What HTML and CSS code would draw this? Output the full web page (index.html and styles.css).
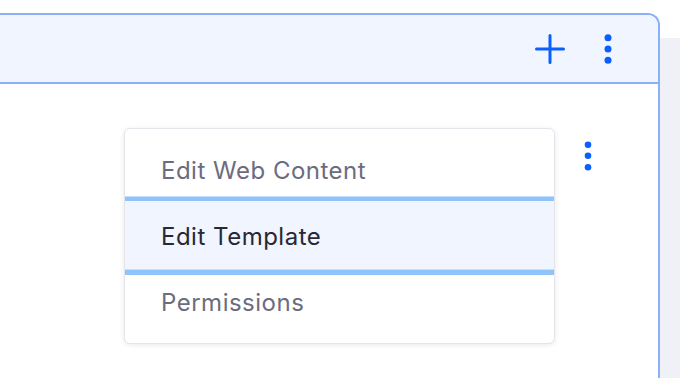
FILE: index.html
```html
<!DOCTYPE html>
<html lang="en">
<head>
<meta charset="utf-8">
<title>Dropdown</title>
<link rel="stylesheet" href="styles.css">
</head>
<body>
<div class="page">
  <div class="panel">
    <div class="panel-header">
      <button class="icon-btn plus" aria-label="Add">
        <svg width="30" height="30" viewBox="0 0 30 30"><path d="M15 1.5V28.5M1.5 15H28.5" stroke="#0b5fff" stroke-width="3" stroke-linecap="round" fill="none"/></svg>
      </button>
      <button class="icon-btn kebab" aria-label="Options">
        <svg width="8" height="32" viewBox="0 0 8 32"><circle cx="4" cy="4.7" r="3.5" fill="#0b5fff"/><circle cx="4" cy="16" r="3.5" fill="#0b5fff"/><circle cx="4" cy="27.3" r="3.5" fill="#0b5fff"/></svg>
      </button>
    </div>
    <div class="panel-body">
      <div class="body-actions">
        <button class="icon-btn kebab-sm" aria-label="More">
          <svg width="8" height="30" viewBox="0 0 8 30"><circle cx="4" cy="3.7" r="3.3" fill="#0b5fff"/><circle cx="4" cy="14.7" r="3.3" fill="#0b5fff"/><circle cx="4" cy="26.3" r="3.3" fill="#0b5fff"/></svg>
        </button>
      </div>
      <ul class="dropdown-menu">
        <li class="dropdown-item">Edit Web Content</li>
        <li class="dropdown-item active">Edit Template</li>
        <li class="dropdown-item">Permissions</li>
      </ul>
    </div>
  </div>
  <div class="gutter"></div>
</div>
</body>
</html>
```

FILE: styles.css
```css
* { box-sizing: border-box; }
html, body {
  margin: 0;
  padding: 0;
  background: #ffffff;
  width: 680px;
  height: 378px;
  overflow: hidden;
  font-family: "Inter", "Noto Sans", sans-serif;
}
.page {
  display: flex;
  align-items: flex-start;
  padding-top: 13px;
  height: 378px;
  overflow: hidden;
}
.panel {
  flex: 0 0 auto;
  width: 690px;
  margin-left: -30px;
  height: 367px;
  border: 2px solid #89b0f8;
  border-bottom: 0;
  border-top-right-radius: 12px;
  background: #ffffff;
}
.panel-header {
  height: 69px;
  background: #f0f5ff;
  border-bottom: 2px solid #89b0f8;
  border-top-right-radius: 10px;
  display: flex;
  align-items: center;
  justify-content: flex-end;
  padding-right: 46px;
  gap: 39px;
}
.icon-btn {
  border: 0;
  background: none;
  padding: 0;
  margin: 0;
  display: flex;
  align-items: center;
  justify-content: center;
  cursor: pointer;
}
.panel-body {
  position: relative;
  height: 294px;
}
.body-actions {
  display: flex;
  justify-content: flex-end;
  padding-top: 57px;
  padding-right: 66px;
}
.dropdown-menu {
  position: absolute;
  left: 152px;
  top: 44px;
  width: 431px;
  height: 216px;
  margin: 0;
  padding: 8px 0;
  list-style: none;
  background: #ffffff;
  border: 1px solid #e4e4ea;
  border-radius: 6px;
  box-shadow: 0 1px 5px rgba(39, 40, 51, 0.10);
}
.dropdown-item {
  height: 66px;
  display: flex;
  align-items: center;
  padding-left: 36px;
  font-size: 24px;
  color: #6b6c7e;
  letter-spacing: 0.5px;
}
.dropdown-item.active {
  color: #272833;
  background: #f0f5ff;
  height: 69px;
  margin-top: -2px;
  margin-bottom: -1px;
  padding-top: 1px;
  box-shadow: 0 -4px 0 #8fc3fa, 0 -5px 0 #c2dffd, 0 5px 0 #8fc3fa, inset 0 -1px 0 #c2dffd;
}
.gutter {
  flex: 1 1 auto;
  margin-top: 25px;
  height: 340px;
  background: #f0f1f6;
}
```
